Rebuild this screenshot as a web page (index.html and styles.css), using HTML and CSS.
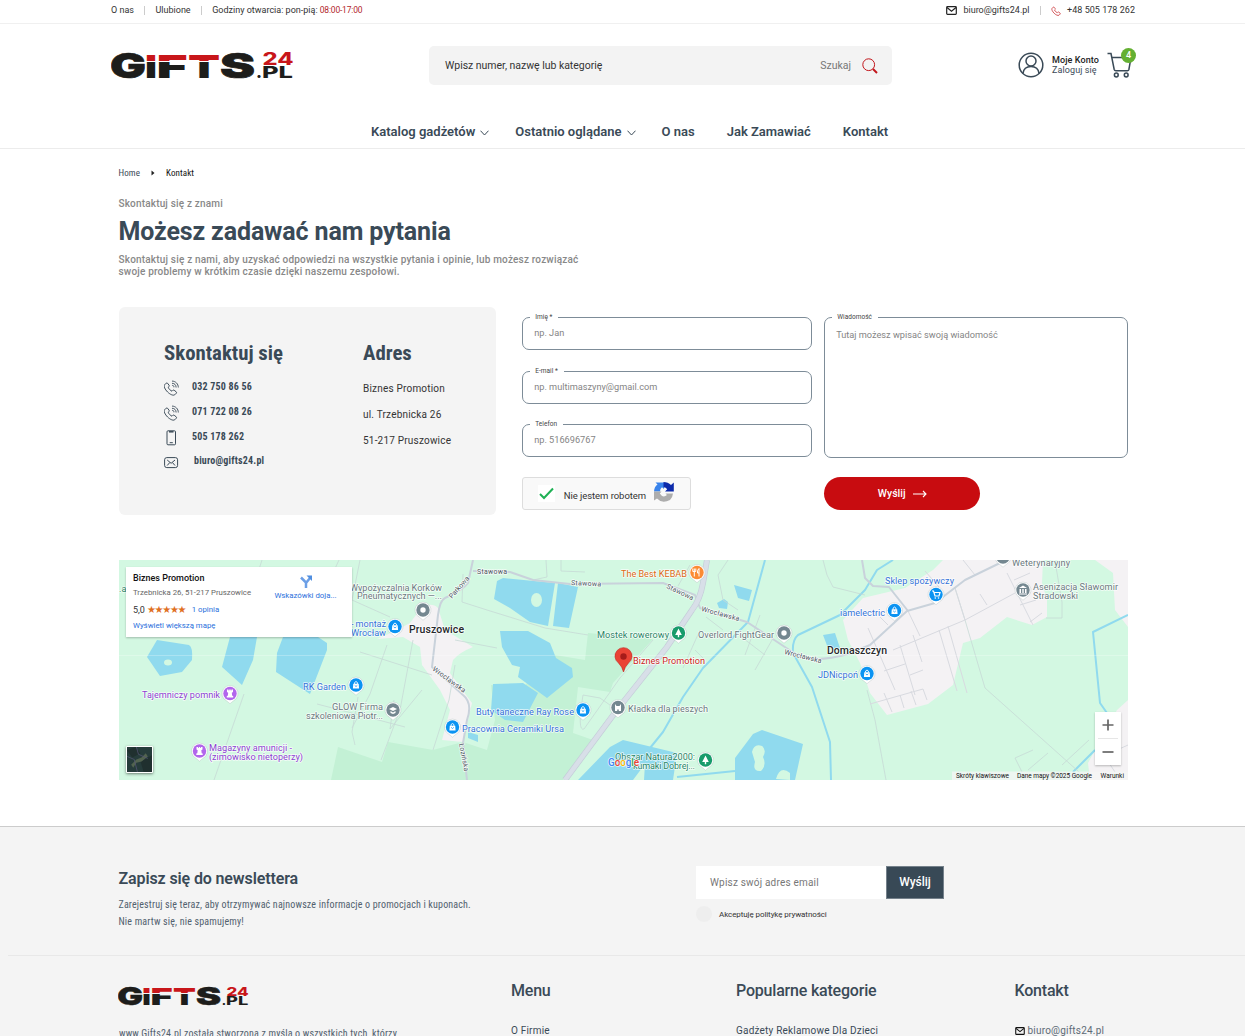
FILE: index.html
```html
<!DOCTYPE html>
<html lang="pl">
<head>
<meta charset="utf-8">
<title>Kontakt - Gifts24.pl</title>
<link rel="stylesheet" href="styles.css">
</head>
<body>
<svg class="defs" width="0" height="0" aria-hidden="true">
  <defs>
    <linearGradient id="split" gradientUnits="userSpaceOnUse" x1="0" y1="0" x2="0" y2="28">
      <stop offset="0.35" stop-color="#c8161a"/><stop offset="0.35" stop-color="#fff" stop-opacity="0"/>
      <stop offset="0.41" stop-color="#fff" stop-opacity="0"/><stop offset="0.41" stop-color="#1d1d1b"/>
    </linearGradient>
    <symbol id="logo" viewBox="0 0 183 28">
      <g font-family="Inter" font-weight="900" fill="#1d1d1b">
        <text x="-1" y="26.600" font-size="34.500" textLength="36" lengthAdjust="spacingAndGlyphs" stroke="#1d1d1b" stroke-width=".7">G</text>
        <g fill="url(#split)">
          <text x="34" y="27" font-size="32" textLength="12" lengthAdjust="spacingAndGlyphs">I</text>
          <text x="45.400" y="27" font-size="32" textLength="31" lengthAdjust="spacingAndGlyphs">F</text>
          <text x="77" y="27" font-size="32" textLength="32" lengthAdjust="spacingAndGlyphs">T</text>
        </g>
        <text x="109" y="26.600" font-size="34.500" textLength="35" lengthAdjust="spacingAndGlyphs" stroke="#1d1d1b" stroke-width=".7">S</text>
        <text x="145" y="27" font-size="15" textLength="6" lengthAdjust="spacingAndGlyphs">.</text>
        <text x="151" y="27" font-size="15.500" font-weight="800" textLength="31" lengthAdjust="spacingAndGlyphs">PL</text>
        <text x="151.500" y="13.600" font-size="17" font-weight="800" fill="#c8161a" textLength="31" lengthAdjust="spacingAndGlyphs">24</text>
      </g>
    </symbol>
    <symbol id="mail" viewBox="0 0 11 9">
      <rect x=".7" y=".7" width="9.600" height="7.600" rx=".8" fill="none" stroke="currentColor" stroke-width="1.200"/>
      <path d="M1 1.500 5.500 5.200 10 1.500" fill="none" stroke="currentColor" stroke-width="1.200"/>
    </symbol>
    <symbol id="handset" viewBox="0 0 16 16">
      <path d="M3.200 3.200 1.600 4.800C.4 6.400 2.200 9.600 4.600 12 7 14.400 10.200 15.900 11.700 14.800L13.300 13.200C13.700 12.700 13.600 12.200 13.200 11.800L11.200 10.300C10.600 9.900 10.200 10 9.800 10.400L9 11.200C7.400 10.500 5.800 8.900 5.200 7.400L6 6.600C6.400 6.200 6.400 5.800 6.100 5.300L4.600 3.300C4.200 2.800 3.600 2.800 3.200 3.200Z" fill="none" stroke="currentColor"/>
    </symbol>
    <symbol id="ringing" viewBox="0 0 16 16">
      <use href="#handset" x="-1" width="16" height="16"/>
      <path d="M8 1.100C11.500 1 14.400 4 14.300 7.500M8 3.300C10.500 3.200 12.200 5 12.100 7.500M8.200 5.400C9.400 5.300 10 6 9.900 7.300" fill="none" stroke="currentColor" stroke-width=".9"/>
    </symbol>
    <symbol id="pin" viewBox="-9 -9 18 20" overflow="visible">
      <path d="M0 10.200 3.500 7.300A8 8 0 1 0-3.500 7.300Z" fill="#fff" stroke="#9aa" stroke-opacity=".5" stroke-width=".6"/>
      <circle r="6.700" fill="currentColor"/>
    </symbol>
    <symbol id="bag" viewBox="-9 -9 18 20" overflow="visible">
      <use href="#pin" x="-9" y="-9" width="18" height="20"/>
      <path d="M-1.400-1V-2.500Q0-4.400 1.400-2.500V-1" fill="none" stroke="#fff" stroke-width=".9"/>
      <path d="M-2.700-1.200H2.700L3.100 3.400H-3.100Z" fill="#fff"/><path d="M-1.300.4Q0 2.600 1.300.4" fill="none" stroke="currentColor" stroke-width=".8"/>
    </symbol>
    <symbol id="tree" viewBox="-9 -9 18 20" overflow="visible">
      <use href="#pin" x="-9" y="-9" width="18" height="20"/>
      <path d="M0-4.600 3.300 2H.7V4.300H-.7V2H-3.300Z" fill="#fff"/>
    </symbol>
    <symbol id="rook" viewBox="-9 -9 18 20" overflow="visible">
      <use href="#pin" x="-9" y="-9" width="18" height="20"/>
      <path d="M-3-4H-1.500V-3H-.7V-4H.7V-3H1.500V-4H3V-1.500L1.800-.8 2.200 2.200 3.200 2.600V4H-3.200V2.600L-2.200 2.200-1.800-.8-3-1.500Z" fill="#fff"/>
    </symbol>
    <symbol id="dot" viewBox="-9 -9 18 20" overflow="visible">
      <use href="#pin" x="-9" y="-9" width="18" height="20"/><circle r="2.700" fill="#fff"/>
    </symbol>
  </defs>
</svg>

<header>
  <div class="topbar">
    <div class="top-left"><a>O nas</a><i></i><a>Ulubione</a><i></i><span>Godziny otwarcia: pon-pią: <b>08:00-17:00</b></span></div>
    <div class="top-right"><svg class="i-mail" width="11" height="9"><use href="#mail"/></svg><a>biuro@gifts24.pl</a><i></i><svg class="i-phone" width="11" height="11"><use href="#handset"/></svg><a class="tel">+48 505 178 262</a></div>
  </div>
  <div class="head">
    <svg class="brand" width="183" height="28"><use href="#logo"/></svg>
    <div class="search"><span class="ph">Wpisz numer, nazwę lub kategorię</span><span class="go">Szukaj</span>
      <svg width="16" height="16" viewBox="0 0 16 16" fill="none" stroke="#c2161b"><circle cx="6.700" cy="6.700" r="5.900"/><path d="M11 11 15 15" stroke-width="2"/></svg>
    </div>
    <div class="account">
      <svg width="26" height="26" viewBox="0 0 26 26" fill="none" stroke="#3a4a57" stroke-width="1.500"><circle cx="13" cy="13" r="11.800"/><circle cx="13" cy="9" r="5"/><path d="M5 21.500C5.500 17 8.500 14.500 13 14.500S20.500 17 21 21.500"/></svg>
      <div class="acc-text"><b>Moje Konto</b><span>Zaloguj się</span></div>
      <div class="cart">
        <svg width="25" height="26" viewBox="0 0 25 26" fill="none" stroke="#3a4a57" stroke-width="1.500"><path d="M.5 1.500H4L7.200 17.500Q7.500 18.700 8.800 18.700H20.500Q21.600 18.700 21.900 17.500L24 5.500H5"/><circle cx="9.300" cy="23" r="1.900"/><circle cx="19.200" cy="23" r="1.900"/></svg>
        <span class="badge">4</span>
      </div>
    </div>
  </div>
  <nav>
    <a class="n1">Katalog gadżetów<svg width="9" height="6" viewBox="0 0 9 6"><path d="M.5 .7 4.500 5 8.500 .7" fill="none" stroke="#3a4a57"/></svg></a>
    <a class="n2">Ostatnio oglądane<svg width="9" height="6" viewBox="0 0 9 6"><path d="M.5 .7 4.500 5 8.500 .7" fill="none" stroke="#3a4a57"/></svg></a>
    <a class="n3">O nas</a><a class="n4">Jak Zamawiać</a><a>Kontakt</a>
  </nav>
</header>

<main>
  <div class="crumbs"><span>Home</span><svg width="4" height="6" viewBox="0 0 4 6"><path d="M.5 .5 3.500 3 .5 5.500Z" fill="#222"/></svg><b>Kontakt</b></div>
  <p class="eyebrow">Skontaktuj się z znami</p>
  <h1>Możesz zadawać nam pytania</h1>
  <p class="lead"><span>Skontaktuj się z nami, aby uzyskać odpowiedzi na wszystkie pytania i opinie, lub możesz rozwiązać</span><br><span>swoje problemy w krótkim czasie dzięki naszemu zespołowi.</span></p>

  <div class="contact">
    <section class="card">
      <div class="reach">
        <h2>Skontaktuj się</h2>
        <div class="row"><svg width="16" height="16"><use href="#ringing"/></svg><span>032 750 86 56</span></div>
        <div class="row"><svg width="16" height="16"><use href="#ringing"/></svg><span>071 722 08 26</span></div>
        <div class="row"><svg width="16" height="16" viewBox="0 0 16 16" fill="none" stroke="currentColor"><rect x="3" y=".8" width="8.500" height="14" rx="1"/><path d="M5 1.800H9.500" stroke-width="1.500"/><path d="M5.700 12.700H8.800"/></svg><span>505 178 262</span></div>
        <div class="row last"><svg width="16" height="16" viewBox="0 0 16 16" fill="none" stroke="currentColor"><rect x=".6" y="2.600" width="13" height="10" rx="2.200"/><path d="M3.200 5 7.100 8.300 11 5M3.200 10.500 5.800 7.500M11 10.500 8.400 7.500"/></svg><span>biuro@gifts24.pl</span></div>
      </div>
      <div class="address">
        <h2>Adres</h2>
        <p>Biznes Promotion</p><p>ul. Trzebnicka 26</p><p>51-217 Pruszowice</p>
      </div>
    </section>
    <form>
      <div class="col-a">
        <div class="field"><label>Imię *</label><span>np. Jan</span></div>
        <div class="field"><label>E-mail *</label><span>np. multimaszyny@gmail.com</span></div>
        <div class="field"><label>Telefon</label><span>np. 516696767</span></div>
        <div class="captcha">
          <div class="tick"><svg width="17" height="17" viewBox="0 0 17 17"><path d="M2 9 6 13 15 3.500" fill="none" stroke="#1fb155" stroke-width="2"/></svg></div>
          <span>Nie jestem robotem</span>
          <svg width="20" height="20" viewBox="0 0 20 20"><path d="M0 9.500Q.3 4.500 3.500 2.500L1.500 .5H10V7L8 5.200Q6 6.500 6 9.500Z" fill="#3a84ec"/><path d="M9.500 0Q14 0 17 3L19.800 .5V9.500H11L13.200 7.200Q12 5.300 9.500 5.300Z" fill="#0d2bab"/><path d="M0 9.500H7.500L5.800 11.500Q9 16.500 13 13L11.500 11.500H19Q18.500 16 16 18Q8 22 3 16.500L0 18.500Z" fill="#adadad"/></svg>
        </div>
      </div>
      <div class="col-b">
        <div class="field area"><label>Wiadomość</label><span>Tutaj możesz wpisać swoją wiadomość</span></div>
        <button type="button">Wyślij<svg width="14" height="8" viewBox="0 0 14 8"><path d="M0 4H13M10 1 13 4 10 7" fill="none" stroke="#fff" stroke-width="1.100"/></svg></button>
      </div>
    </form>
  </div>

  <div class="map">
    <svg class="canvas" width="1009" height="220" viewBox="119 560 1009 220">
      <rect x="119" y="560" width="1009" height="220" fill="#d3f8e2"/>
      <path fill="#c3f1d5" d="M331 780 338 747 382 762 388 742 433 750 463 742 487 750 495 720 491 685 520 690 555 655 585 660 588 633 653 639 613 683 610 692 578 687 573 733 593 740 563 780Z"/>
      <g fill="#f4f2f4">
        <path d="M422 607Q432 602 438 608L445 630 473 647Q460 652 453 660L450 673 472 703 463 742 442 740 450 710 440 690 422 665 420 647 403 637 377 639 393 632 410 623Z"/>
        <path d="M943 560 933 570 905 588 863 598 843 620 848 640 860 663 870 693 887 715 928 704 953 685 963 643 980 638 1007 617 1032 625 1047 617V600L1042 583 1043 560Z"/>
        <path d="M1095 560 1113 573 1115 610 1128 627V560ZM1128 700 1117 710 1088 763 1090 780H1128Z"/>
      </g>
      <g fill="#90daee">
        <path d="M147 657 157 640 189 645Q193 647 192 660L182 672 160 676Z"/>
        <path d="M230 637H257L253 660 242 685 222 667ZM283 637H318L327 643 327 650 310 694 276 672 277 653Z"/>
        <path d="M503 578 555 583 548 626 530 622 510 608 494 599 497 581ZM558 583 578 587 569 628 553 626Z"/>
        <path d="M500 631H528L550 643 556 658 572 668 573 677 547 698 518 677 520 667 512 665 502 647ZM493 684 523 683 538 693 523 722 505 720 491 710ZM468 732 478 735V742L468 738Z"/>
        <path d="M578 780 610 747 623 740 677 753 673 780ZM735 780V758L753 734 762 730 803 744 795 780ZM734 585 752 590 749 601 738 598ZM717 603 724 599 728 602 727 609 719 608ZM823 635 835 633 840 648H828Z"/>
      </g>
      <g fill="#d3f8e2"><ellipse cx="168" cy="662.500" rx="4" ry="3"/><ellipse cx="536.500" cy="600" rx="5.500" ry="7"/><path d="M752 752Q754 743 762 746 767 750 763 757 767 765 761 771 752 772 755 762ZM776 779Q780 765 790 773V780ZM633 780 645 764 644 780Z"/></g>
      <g fill="none" stroke="#90daee" stroke-width="2" stroke-linejoin="round">
        <path d="M765 560 748 622 703 668 683 697 663 732 650 748M893 560 877 570 865 590 840 615 798 635Q792 640 793 653L812 687 830 742 831 780"/>
        <path d="M1128 615 1093 632 1100 703 1107 713M1095 750 1073 772M677 777 735 771"/>
      </g>
      <g fill="none" stroke="#c6d9d6" stroke-width=".8">
        <path d="M262 560 240 628M339 560 325 590M244 694 214 780M360 560 352 600 390 617M387 645 370 694 352 728M360 652 432 675M413 640 400 710 381 760M394 700 390 729 422 690M317 704 344 711 405 727M358 697 352 732 355 745M455 665 449 700 433 750"/>
        <path d="M463 574 462 602 487 610 545 628 588 635M455 640 497 648M546 560 547 577 533 580M561 560V571L585 572M690 565 678 586M728 560 718 575 723 600 738 610M653 640 620 678 584 729Q577 732 583 695L600 698 617 710M700 630 683 668M695 650 705 660M760 615 745 655M735 632 765 655M772 640 755 670M706 617 723 630"/>
        <path d="M823 560 827 575 833 587 865 595"/>
        <path d="M867 690 875 720 886 780M955 588 965 620 985 688 1088 780M1033 750 1015 758 1022 772M1048 753 1028 770M1089 740 1062 765M1056 567 1062 602 1062 618 1046 618"/>
      </g>
      <g fill="none" stroke="#d8dae0" stroke-width="1">
        <path d="M893 650 965 620 1015 593M908 611 920 636M868 628 895 690M900 645 915 695M870 704 923 689M884 671 905 664M910 675 923 670M913 635 922 662M939 630 957 691M948 626 967 693M955 588 965 620M980 594 987 605M963 560 975 575M925 571 939 587M1007 573 1033 625M1014 580 1030 573M1020 605 1036 600M1030 622 1042 613M884 693 892 712M900 695 904 708M911 691 916 705M923 689 927 700M880 617 888 625M1095 760 1128 745M1107 760 1115 772"/>
      </g>
      <g fill="none" stroke="#c9d2db" stroke-width="2" stroke-linejoin="round">
        <path d="M473 560 468 583Q463 590 445 598 440 600 438 615L432 667 463 695Q473 703 467 720L463 743 467 780M473 571 510 572 533 580 570 584 663 583 695 595 700 608 747 622 800 657Q820 662 848 654L870 645 907 611 935 603 965 580 1002 562M862 560 865 578 873 586 889 587 908 611"/>
      </g>
      <path d="M707 560 703 583Q700 600 692 610L667 647 617 710 565 780" fill="none" stroke="#c5ced9" stroke-width="6"/>
      <path d="M707 560 703 583Q700 600 692 610L667 647 617 710 565 780" fill="none" stroke="#d8dfe8" stroke-width="4.600"/>
      <path d="M119 655.500H1128" stroke="#fff" stroke-opacity=".25"/>

      <g class="road">
        <text x="477" y="573.500" textLength="30">Stawowa</text><text x="571" y="585" transform="rotate(3 571 585)" textLength="30">Stawowa</text><text x="666" y="588" transform="rotate(25 666 588)" textLength="29">Stawowa</text>
        <text x="701" y="611" transform="rotate(15 701 611)" textLength="39">Wrocławska</text><text x="784" y="654" transform="rotate(14 784 654)" textLength="38">Wrocławska</text>
        <text x="432" y="670" transform="rotate(36 432 670)" textLength="39">Wrocławska</text><text x="452" y="599" transform="rotate(-49 452 599)" textLength="27">Parkowa</text><text x="459" y="744" transform="rotate(79 459 744)" textLength="28">Łozińska</text>
      </g>
      <g class="town"><text x="409" y="633" textLength="55">Pruszowice</text><text x="827" y="654" textLength="60">Domaszczyn</text></g>
      <g class="poi gray">
        <text x="350" y="590.500" textLength="92">Wypożyczalnia Korków</text><text x="357" y="599" textLength="85">Pneumatycznych —...</text>
        <text x="332" y="709.500" textLength="51">GLOW Firma</text><text x="306" y="719" textLength="77">szkoleniowa Piotr...</text>
        <text x="698" y="637.500" textLength="76">Overlord FightGear</text><text x="628" y="712" textLength="80">Kładka dla pieszych</text>
        <text x="1012" y="566" textLength="58">Weterynaryjny</text><text x="1033" y="589.500" textLength="85">Asenizacja Sławomir</text><text x="1033" y="598.500" textLength="45">Stradowski</text>
      </g>
      <g class="poi blue">
        <text x="351" y="626.500" textLength="35">- montaż</text><text x="351" y="635.500" textLength="35">Wrocław</text><text x="303" y="689.500" textLength="43">RK Garden</text>
        <text x="476" y="715" textLength="98">Buty taneczne Ray Rose</text><text x="462" y="732" textLength="102">Pracownia Ceramiki Ursa</text>
        <text x="885" y="584" textLength="69">Sklep spożywczy</text><text x="840" y="615.500" textLength="45">iamelectric</text><text x="818" y="678" textLength="40">JDNicpoń</text>
      </g>
      <g class="poi purple"><text x="142" y="698" textLength="78">Tajemniczy pomnik</text><text x="209" y="751" textLength="83">Magazyny amunicji -</text><text x="209" y="760" textLength="94">(zimowisko nietoperzy)</text></g>
      <g class="poi green"><text x="597" y="637.500" textLength="72">Mostek rowerowy</text><text x="615" y="760" textLength="80">Obszar Natura2000:</text><text x="633" y="769" textLength="62">kumaki Dobrej...</text><text x="119" y="592">.a</text></g>
      <g class="poi orange"><text x="621" y="577" textLength="66">The Best KEBAB</text></g>
      <g class="poi red"><text x="633" y="663.500" textLength="72">Biznes Promotion</text></g>

      <g color="#0b93f2"><use href="#bag" x="386" y="617.500" width="18" height="20"/><use href="#bag" x="347" y="676" width="18" height="20"/><use href="#bag" x="443.500" y="718" width="18" height="20"/><use href="#bag" x="574" y="701" width="18" height="20"/><use href="#bag" x="885.500" y="601.500" width="18" height="20"/><use href="#bag" x="858" y="664.500" width="18" height="20"/><use href="#pin" x="927" y="585.500" width="18" height="20"/></g>
      <path d="M932 591H933.500L935 596H939L940 592.500H934" fill="none" stroke="#fff" stroke-width="1.200"/><circle cx="935.300" cy="598" r=".8" fill="#fff"/><circle cx="938.500" cy="598" r=".8" fill="#fff"/>
      <g color="#b266ec"><use href="#rook" x="221" y="684.500" width="18" height="20"/><use href="#rook" x="190.500" y="742" width="18" height="20"/></g>
      <g color="#189b6b"><use href="#tree" x="669.500" y="624" width="18" height="20"/><use href="#tree" x="696.500" y="751" width="18" height="20"/></g>
      <g color="#748790"><use href="#dot" x="414" y="601" width="18" height="20"/><use href="#dot" x="775" y="624" width="18" height="20"/><use href="#pin" x="384" y="701" width="18" height="20"/><use href="#pin" x="609" y="698.500" width="18" height="20"/><use href="#pin" x="1014" y="581" width="18" height="20"/><use href="#pin" x="994" y="548" width="18" height="20"/></g>
      <g fill="#fff"><path d="M389 709 393 707 397 709 393 711ZM390.500 711 393 712.500 395.500 711V713L393 714 390.500 713ZM615 704 616.500 706H619.500L621 704V711H618.800V709.500H617.200V711H615ZM1019 588 1023 585.500 1027 588ZM1019.500 589H1021V593H1019.500ZM1022.300 589H1023.700V593H1022.300ZM1025 589H1026.500V593H1025ZM1019 593.500H1027V594.500H1019Z"/></g>
      <g color="#fb8b34"><use href="#pin" x="688" y="563.500" width="18" height="20"/></g>
      <path d="M694.300 568.500V576.500M692.800 568.500V571.500H695.800V568.500M699 576.500V568.500Q697 570 697.500 573H699" fill="none" stroke="#fff"/>
      <path d="M623.500 672Q622.500 667 618.500 663A8.500 8.500 0 1 1 628.500 663Q624.500 667 623.500 672Z" fill="#ea4335" stroke="#c5221f" stroke-width=".6"/><circle cx="623.500" cy="656.500" r="3.200" fill="#a61c1a"/>
      <text class="google" x="608" y="766" textLength="31"><tspan fill="#4285f4">G</tspan><tspan fill="#ea4335">o</tspan><tspan fill="#fbbc04">o</tspan><tspan fill="#4285f4">g</tspan><tspan fill="#34a853">l</tspan><tspan fill="#ea4335">e</tspan></text>
      <path d="M952 771.500H1128V780H952Z" fill="#f5f5f5" fill-opacity=".75"/>
      <g class="legal"><text x="956" y="778" textLength="53">Skróty klawiszowe</text><text x="1017" y="778" textLength="75">Dane mapy ©2025 Google</text><text x="1100.500" y="778" textLength="23.500">Warunki</text></g>
    </svg>
    <div class="place">
      <div><b>Biznes Promotion</b><p>Trzebnicka 26, 51-217 Pruszowice</p><div class="stars"><span>5,0</span><em>★★★★★</em><a>1 opinia</a></div><a class="bigger">Wyświetl większą mapę</a></div>
      <div class="route"><svg width="12" height="13" viewBox="0 0 12 13"><path d="M1 2.500 6 7.500V13M6 8 10 3" fill="none" stroke="#6c9fe6" stroke-width="2.500"/><path d="M6.500 .5H12V6Z" fill="#4f8ee0"/></svg><a>Wskazówki doja...</a></div>
    </div>
    <svg class="sat" width="24" height="24" viewBox="0 0 24 24"><rect width="24" height="24" fill="#263c3b"/><path d="M0 3 8 0 13 6 5 10ZM13 14 24 8V24H16Z" fill="#20302f"/><path d="M4 17 9 12 14 10 18 6 20 9 14 14 9 15 6 20Z" fill="#52634f"/><path d="M9 0 11 7 20 11M0 9 7 12 10 24" fill="none" stroke="#557" stroke-width=".7"/></svg>
    <div class="zoom"><svg width="12" height="12" viewBox="0 0 12 12"><path d="M.5 6H11.500M6 .5V11.500" stroke="#666" stroke-width="1.700"/></svg><svg width="12" height="12" viewBox="0 0 12 12"><path d="M.5 6H11.500" stroke="#666" stroke-width="1.700"/></svg></div>
  </div>
</main>

<footer>
  <div class="news">
    <div class="news-text"><h3>Zapisz się do newslettera</h3><p class="p1">Zarejestruj się teraz, aby otrzymywać najnowsze informacje o promocjach i kuponach.</p><p class="p2">Nie martw się, nie spamujemy!</p></div>
    <div class="signup">
      <div class="bar"><span>Wpisz swój adres email</span><b>Wyślij</b></div>
      <div class="agree"><i></i><span>Akceptuję politykę prywatności</span></div>
    </div>
  </div>
  <div class="links">
    <div class="about"><svg width="131" height="20" viewBox="0 0 183 28" preserveAspectRatio="none"><use href="#logo" width="183" height="28"/></svg><p>www.Gifts24.pl została stworzona z myślą o wszystkich tych, którzy</p></div>
    <div><h4>Menu</h4><p class="lk">O Firmie</p></div>
    <div><h4>Popularne kategorie</h4><p class="lk">Gadżety Reklamowe Dla Dzieci</p></div>
    <div><h4>Kontakt</h4><p class="lk mail"><svg width="10" height="8" viewBox="0 0 11 9"><use href="#mail" width="11" height="9"/></svg>biuro@gifts24.pl</p></div>
  </div>
</footer>
</body>
</html>
```
FILE: styles.css
```css
* { box-sizing: border-box; margin: 0; padding: 0; }
body { width: 1245px; height: 1036px; overflow: hidden; background: #fff; color: #3a4a57; font-family: Roboto, "Liberation Sans", sans-serif; font-size: 10px; }
svg { flex: none; display: block; }
.defs { position: absolute; }

.topbar { height: 24px; border-bottom: 1px solid #f0f0f0; padding: 0 110px 3px 111px; display: flex; justify-content: space-between; align-items: center; font-size: 9px; color: #333; }
.top-left, .top-right { display: flex; align-items: center; }
.topbar i { width: 1px; height: 9px; background: #ccc; margin: 0 10.300px; }
.topbar b { font-weight: 400; color: #b3282d; font-size: 8.500px; letter-spacing: -.2px; }
.i-mail { color: #222; margin-right: 6px; }
.i-phone { color: #c2161b; margin-right: 5px; }
.tel { letter-spacing: .03px; }

.head { height: 83px; display: grid; grid-template-columns: 318px 463px 1fr; padding: 22px 110px 0 111px; align-items: start; }
.brand { margin-top: 5px; }
.search { height: 39px; background: #f3f3f3; border-radius: 5px; display: flex; align-items: center; padding: 0 14px 0 16px; font-size: 10.500px; color: #333; }
.ph { flex: 1; letter-spacing: -.03px; }
.go { color: #777; margin-right: 11px; }
.account { display: flex; justify-content: flex-end; align-items: center; height: 38px; }
.acc-text { margin: 0 8px 0 8px; display: flex; flex-direction: column; font-size: 9px; line-height: 10px; letter-spacing: .1px; }
.acc-text b { font-weight: 500; color: #222; }
.cart { position: relative; width: 28px; }
.badge { position: absolute; left: 14px; top: -4px; width: 15px; height: 15px; border-radius: 50%; background: #64b032; color: #fff; font-size: 9px; font-weight: 500; text-align: center; line-height: 15px; }
nav { height: 42px; border-bottom: 1px solid #ececec; display: flex; padding-left: 371px; font-size: 13px; font-weight: 600; line-height: 50px; }
nav a { display: flex; align-items: center; height: 50px; margin-right: 32px; }
nav svg { margin: 2px 0 0 5px; }
nav .n1, nav .n2 { margin-right: 26px; }

main { padding: 0 117px 0 119px; height: 677px; }
.crumbs, h1, .eyebrow, .lead { margin-left: -.5px; }
.crumbs, .card h2, .row span, .news p, .about p { font-family: "Roboto Condensed", Roboto, sans-serif; font-stretch: 75%; }
.crumbs { display: flex; align-items: center; padding-top: 17px; height: 31px; font-size: 9px; letter-spacing: .1px; }
.crumbs svg { margin: 0 11px; }
.crumbs b { font-weight: 400; color: #111; }
.eyebrow { margin-top: 18px; font-size: 10px; line-height: 12px; font-weight: 500; color: #888; letter-spacing: .17px; }
h1 { font-size: 25px; line-height: 30px; margin-top: 7px; font-weight: 700; letter-spacing: -.14px; }
.lead { margin-top: 7px; font-size: 10px; line-height: 12px; font-weight: 500; color: #888; letter-spacing: .185px; white-space: nowrap; }

.contact { display: flex; margin-top: 29px; height: 208px; }
.card { width: 378px; height: 208px; background: #f4f4f4; border-radius: 6px; padding: 33px 45px 0; display: flex; }
.reach { width: 199px; flex: none; }
h2 { font-size: 20.800px; line-height: 26px; font-weight: 700; }
.row { display: flex; gap: 12px; height: 25px; color: #3a4a57; }
.row svg { margin-top: 7px; }
.reach h2 { margin-bottom: 7px; }
.row span { font-size: 10px; font-weight: 700; line-height: 12px; padding-top: 8px; letter-spacing: .2px; }
.row.last { gap: 14px; }
.row.last span { padding-top: 7px; }
.address p { font-size: 10px; line-height: 26px; letter-spacing: .2px; color: #333; white-space: nowrap; }
.address h2 { margin-bottom: 10px; }
form { display: flex; gap: 12px; padding: 10px 0 0 26px; }
.col-a { width: 290px; }
.col-b { width: 304px; }
.field { position: relative; height: 33px; border: 1px solid #7d8c98; border-radius: 7px; margin-bottom: 20.500px; padding: 0 11px; font-size: 9.200px; line-height: 30px; color: #858585; }
.field label { position: absolute; left: 7px; top: -5px; padding: 0 6px 0 5px; background: #fff; font-size: 6.500px; line-height: 8px; color: #444; letter-spacing: .05px; }
.area { height: 140.500px; margin-bottom: 19.500px; line-height: 34px; }
.captcha { width: 169px; height: 33px; border: 1px solid #ddd; border-radius: 3px; background: #f9f9f9; display: flex; align-items: center; padding-left: 15px; margin-top: -.5px; color: #333; font-size: 9.500px; letter-spacing: -.05px; }
.tick { width: 17px; height: 17px; background: #fff; }
.captcha span { margin: 3px 9px 0 8.500px; width: 81.500px; white-space: nowrap; }
.captcha > svg { margin-top: -3px; }
button { width: 156px; height: 33px; border: 0; border-radius: 17px; background: #c80c10; color: #fff; font: 500 10.500px Roboto; display: flex; align-items: center; justify-content: center; gap: 7px; }

.map { position: relative; margin-top: 45px; width: 1009px; height: 220px; }
.canvas { display: block; }
.canvas text { font-family: Roboto; paint-order: stroke; stroke: #fff; stroke-width: 1.600px; stroke-opacity: .75; stroke-linejoin: round; }
.poi { font-size: 9.200px; }
.road { font-size: 7px; fill: #4c5660; }
.town { font-size: 10.500px; font-weight: 500; fill: #26282b; }
.gray { fill: #6b7a80; }
.blue { fill: #3573d9; }
.purple { fill: #8c41d2; }
.green { fill: #2a8567; }
.orange { fill: #dc6a16; }
.red { fill: #cb2422; }
.google { font-size: 10px; font-weight: 500; }
.legal { font-size: 6.500px; fill: #111; }
.canvas .legal text { stroke: none; }
.place { position: absolute; left: 7px; top: 7px; width: 226px; height: 70px; background: #fff; box-shadow: 0 1px 2px rgba(0,0,0,.25); padding: 5px 5px 5px 7px; display: flex; justify-content: space-between; font-size: 7.800px; color: #666; white-space: nowrap; }
.place b { display: block; font-size: 9px; font-weight: 500; color: #111; line-height: 13px; }
.place p { line-height: 15px; }
.place a { color: #2a70dc; }
.stars { display: flex; align-items: center; height: 19px; font-size: 9px; color: #333; }
.stars em { font: 10px/10px "DejaVu Sans"; color: #e0701f; margin: 0 6.500px 0 2px; letter-spacing: -1.300px; }
.stars a { font-size: 7.800px; }
.bigger { line-height: 14px; display: block; }
.route { width: 66px; text-align: center; padding: 3px 3px 0 0; margin-right: 7px; }
.route svg { margin: 0 auto 3px; }
.sat { position: absolute; left: 7px; top: 186px; width: 27px; height: 27px; border: 1.500px solid #fff; border-radius: 1px; box-shadow: 0 1px 3px rgba(0,0,0,.5); }
.zoom { position: absolute; left: 976px; top: 152px; width: 26px; height: 53px; background: #fff; box-shadow: 0 1px 2px rgba(0,0,0,.25); display: grid; grid-template-rows: 1fr 1fr; place-items: center; }
.zoom svg + svg { position: relative; }
.zoom { background: linear-gradient(#e6e6e6, #e6e6e6) center / 20px 1px no-repeat #fff; }

footer { height: 211px; border-top: 1px solid #ccc; background: #f4f4f4; }
.news { height: 129px; margin-left: 8px; border-bottom: 1px solid #e8e8e8; padding: 39px 0 0 110.500px; display: flex; }
.news-text { width: 577.500px; }
h3 { font-size: 16px; line-height: 24px; padding-top: 1px; font-weight: 600; letter-spacing: -.12px; }
.news p { font-size: 10px; line-height: 17px; letter-spacing: .17px; color: #52616e; }
.news .p1 { margin-top: 5px; }
.bar { width: 248px; height: 33px; display: flex; background: #fff; font-size: 10px; letter-spacing: .2px; color: #777; line-height: 33px; padding-left: 14px; }
.bar span { flex: 1; }
.bar b { width: 58px; border: 1px solid #75818b; background: #384956; color: #fff; font-size: 12px; line-height: 31px; font-weight: 500; text-align: center; letter-spacing: 0; }
.agree { display: flex; align-items: center; gap: 7px; margin-top: 7px; font-size: 8px; color: #333; letter-spacing: -.08px; }
.agree i { width: 16px; height: 16px; border-radius: 50%; background: #eee; }
.links { display: grid; grid-template-columns: 392px 225px 278.500px 1fr; padding: 22px 0 0 119px; }
.about svg { margin: 8px 0 0 -1px; }
.about p { margin-top: 20px; font-size: 10px; line-height: 16px; letter-spacing: .165px; color: #52616e; white-space: nowrap; }
h4 { font-size: 16px; line-height: 26px; font-weight: 500; letter-spacing: -.2px; }
.lk { margin-top: 18px; line-height: 18px; letter-spacing: .2px; display: flex; align-items: center; gap: 4px; }
.mail { color: #5d6b77; gap: 3px; }
.mail svg { color: #111; }
```
